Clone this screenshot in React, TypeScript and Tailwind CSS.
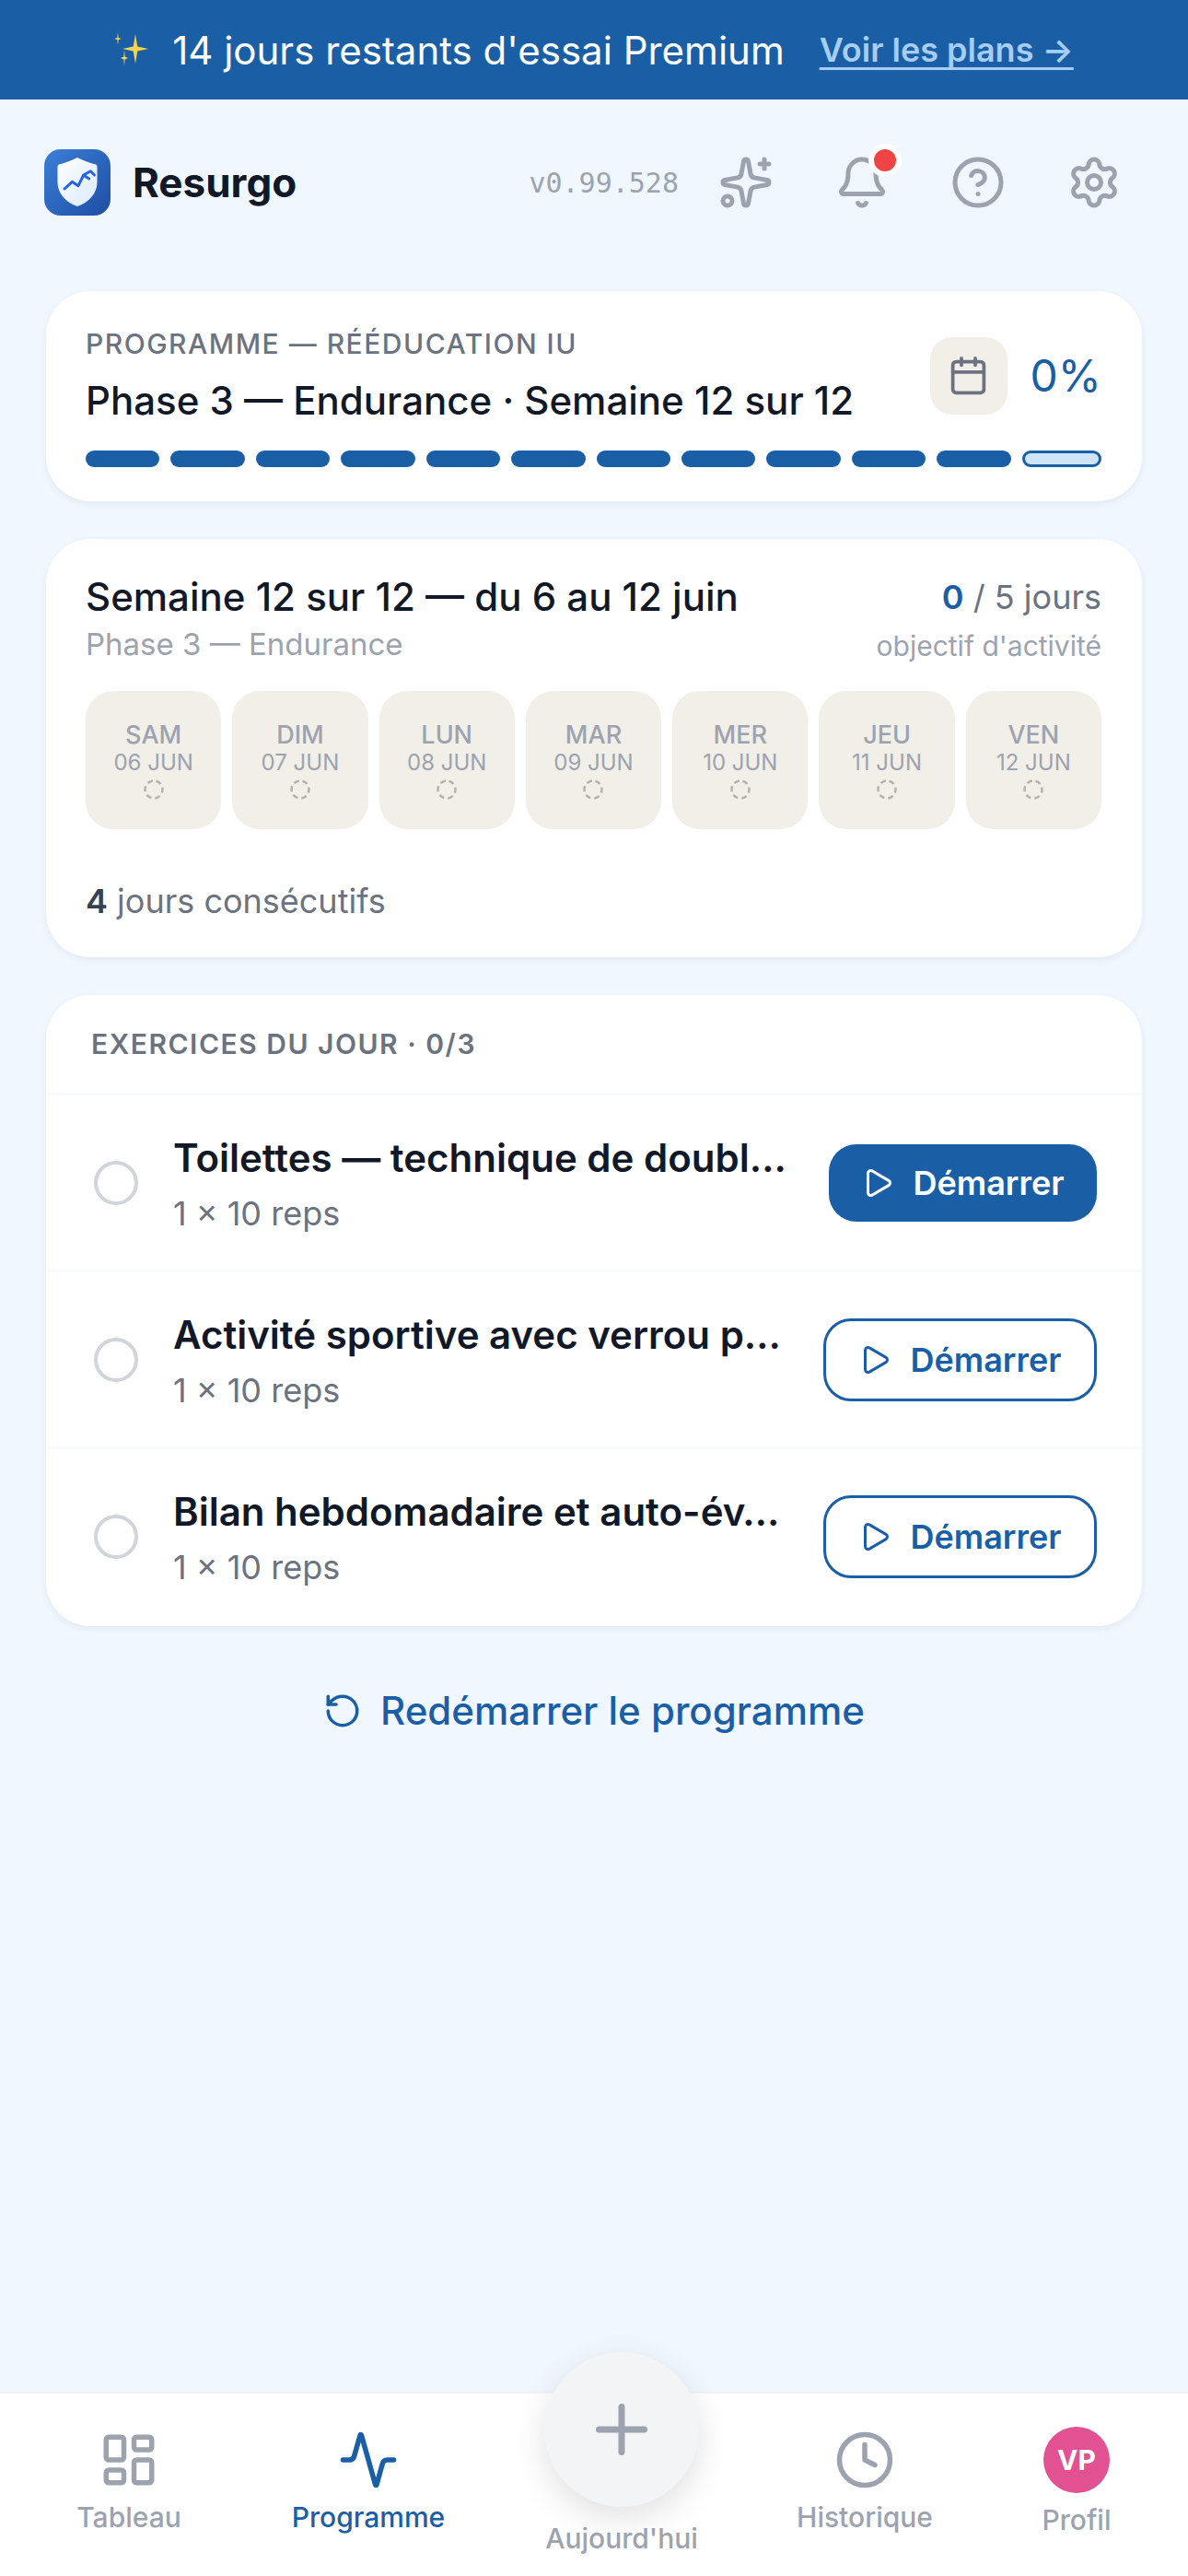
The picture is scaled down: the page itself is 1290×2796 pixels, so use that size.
import { Activity, Bell, Calendar, CircleHelp, Clock, LayoutDashboard, Play, Plus, RotateCcw, Settings, Sparkles } from 'lucide-react';

const DAYS = [
  { day: 'SAM', date: '06 JUN' },
  { day: 'DIM', date: '07 JUN' },
  { day: 'LUN', date: '08 JUN' },
  { day: 'MAR', date: '09 JUN' },
  { day: 'MER', date: '10 JUN' },
  { day: 'JEU', date: '11 JUN' },
  { day: 'VEN', date: '12 JUN' },
];

const EXERCISES = [
  { title: 'Toilettes — technique de doubl…', primary: true },
  { title: 'Activité sportive avec verrou p…', primary: false },
  { title: 'Bilan hebdomadaire et auto-év…', primary: false },
];

function Star({ cx, cy, rx, ry }: { cx: number; cy: number; rx: number; ry: number }) {
  const kx = rx * 0.16;
  const ky = ry * 0.16;
  return (
    <path
      d={`M${cx} ${cy - ry}L${cx + kx} ${cy - ky}L${cx + rx} ${cy}L${cx + kx} ${cy + ky}L${cx} ${cy + ry}L${cx - kx} ${cy + ky}L${cx - rx} ${cy}L${cx - kx} ${cy - ky}Z`}
      fill="#fcd34d"
    />
  );
}

function SparklesEmoji() {
  return (
    <svg width="38" height="38" viewBox="0 0 38 38" className="shrink-0">
      <Star cx={23} cy={18} rx={14} ry={16} />
      <Star cx={4} cy={7} rx={4} ry={7} />
      <Star cx={11} cy={28} rx={4} ry={9} />
    </svg>
  );
}

function Logo() {
  return (
    <svg width="72" height="72" viewBox="0 0 72 72" className="shrink-0">
      <defs>
        <linearGradient id="logoBg" x1="0" y1="0" x2="1" y2="1">
          <stop offset="0" stopColor="#3b7fd9" />
          <stop offset="1" stopColor="#1e4ea3" />
        </linearGradient>
        <linearGradient id="logoShield" x1="0" y1="0" x2="1" y2="1">
          <stop offset="0" stopColor="#ffffff" />
          <stop offset="1" stopColor="#dbeafe" />
        </linearGradient>
      </defs>
      <rect width="72" height="72" rx="18" fill="url(#logoBg)" />
      <path
        d="M36 9C43 12.5 50 15 56 16.5C57 17 57.5 18 57.5 19V36C57.5 48 48 58 36 62C24 58 14.5 48 14.5 36V19C14.5 18 15 17 16 16.5C22 15 29 12.5 36 9Z"
        fill="url(#logoShield)"
      />
      <path
        d="M22 43L30.3 35.3L37 39.7L42.7 28L48.7 32M42.7 28L50.3 23.7L54.5 28"
        fill="none"
        stroke="#2563eb"
        strokeWidth="3"
        strokeLinecap="round"
        strokeLinejoin="round"
      />
    </svg>
  );
}

function DashedRing() {
  return (
    <svg width="24" height="24" viewBox="0 0 24 24" className="mt-[2px]">
      <circle cx="12" cy="12" r="9.5" fill="none" stroke="#b5b2aa" strokeWidth="2.5" strokeDasharray="6 3.95" transform="rotate(-75 12 12)" />
    </svg>
  );
}

function DayCell({ day, date }: { day: string; date: string }) {
  return (
    <div className="flex h-[150px] flex-col items-center rounded-[30px] bg-[#f1efe8] pt-[32px]">
      <span className="text-[27px] leading-[31px] font-medium text-[#9ca3af]">{day}</span>
      <span className="text-[24px] leading-[30px] text-[#9ca3af]">{date}</span>
      <DashedRing />
    </div>
  );
}

function ExerciseRow({ title, primary }: { title: string; primary: boolean }) {
  return (
    <div className="flex h-[192px] items-center border-t-[3px] border-[#f9fafb] pr-[49px] pl-[52px]">
      <div className="h-[48px] w-[48px] shrink-0 rounded-full border-[4.5px] border-[#d1d5db]" />
      <div className="ml-[38px] min-w-0 flex-1 pt-[4px]">
        <div className="truncate text-[42px] leading-[54px] font-semibold text-[#111827]">{title}</div>
        <div className="mt-[9px] text-[36px] leading-[48px] text-[#6b7280]">1 × 10 reps</div>
      </div>
      {primary ? (
        <button className="ml-[30px] flex h-[84px] w-[291px] shrink-0 items-center justify-center gap-[20px] rounded-[30px] bg-[#1a5fa5] text-[36px] font-semibold text-white">
          <Play size={36} />
          Démarrer
        </button>
      ) : (
        <button className="ml-[30px] flex h-[90px] w-[297px] shrink-0 items-center justify-center gap-[20px] rounded-[30px] border-[3px] border-[#1a5fa5] bg-white text-[36px] font-semibold text-[#1a5fa5]">
          <Play size={36} />
          Démarrer
        </button>
      )}
    </div>
  );
}

function NavItem({ label, active, children }: { label: string; active?: boolean; children: React.ReactNode }) {
  return (
    <div className="flex flex-col items-center pt-[39px]">
      <div className={active ? 'text-[#1a5fa5]' : 'text-[#9ca3af]'}>{children}</div>
      <span className={`mt-[8px] text-[30px] leading-[42px] font-medium ${active ? 'text-[#1a5fa5]' : 'text-[#9ca3af]'}`}>
        {label}
      </span>
    </div>
  );
}

export default function App() {
  return (
    <div className="flex min-h-[2796px] flex-col bg-[#f0f7ff] font-['Inter',sans-serif]">
      <div className="flex h-[108px] items-center justify-center bg-[#1a5fa5]">
        <SparklesEmoji />
        <span className="ml-[25px] text-[42px] text-white">14 jours restants d'essai Premium</span>
        <a className="ml-[38px] text-[36px] font-semibold text-[#a5cdf5] underline decoration-[3px] underline-offset-[6px] [text-decoration-skip-ink:none]">Voir les plans →</a>
      </div>

      <header className="flex h-[180px] items-center pr-[72px] pl-[48px]">
        <Logo />
        <span className="ml-[24px] text-[44px] font-bold text-[#111827]">Resurgo</span>
        <span className="ml-auto font-['DejaVu_Sans_Mono',monospace] text-[30px] text-[#9ca3af]">v0.99.528</span>
        <div className="ml-[43px] flex items-center gap-[66px] text-[#9ca3af]">
          <Sparkles size={60} />
          <div className="relative h-[60px] w-[60px]">
            <Bell size={60} />
            <span className="absolute top-[-12px] left-[37px] h-[36px] w-[36px] rounded-full border-[6px] border-white bg-[#ef4444]" />
          </div>
          <CircleHelp size={60} />
          <Settings size={60} />
        </div>
      </header>

      <main className="flex-1 px-[50px] pt-[28px]">
        <section className="rounded-[48px] bg-white py-[37px] pr-[44px] pl-[43px] shadow-[0_3px_9px_rgba(0,0,0,0.06)]">
          <div className="flex items-center justify-between">
            <div>
              <div className="text-[30px] leading-[40px] font-medium tracking-[1.5px] text-[#6b7280]">PROGRAMME — RÉÉDUCATION IU</div>
              <div className="mt-[15px] text-[42px] leading-[54px] font-medium text-[#111827]">Phase 3 — Endurance · Semaine 12 sur 12</div>
            </div>
            <div className="flex items-center gap-[25px]">
              <div className="flex h-[84px] w-[84px] items-center justify-center rounded-[24px] bg-[#f1efe8] text-[#6b7280]">
                <Calendar size={45} />
              </div>
              <span className="text-[48px] text-[#1a5fa5]">0%</span>
            </div>
          </div>
          <div className="mt-[27px] flex gap-[12px]">
            {Array.from({ length: 11 }).map((_, i) => (
              <div key={i} className="h-[18px] flex-1 rounded-full bg-[#1a5fa5]" />
            ))}
            <div className="h-[18px] flex-1 rounded-full border-[3px] border-[#1a5fa5] bg-[#d0e4f9]" />
          </div>
        </section>

        <section className="mt-[41px] rounded-[48px] bg-white pt-[36px] pr-[44px] pb-[34px] pl-[43px] shadow-[0_3px_9px_rgba(0,0,0,0.06)]">
          <div className="flex justify-between">
            <div>
              <div className="text-[42px] leading-[54px] font-medium text-[#111827]">Semaine 12 sur 12 — du 6 au 12 juin</div>
              <div className="mt-[1px] text-[33px] leading-[46px] text-[#9ca3af]">Phase 3 — Endurance</div>
            </div>
            <div className="text-right">
              <div className="text-[36px] leading-[54px] text-[#6b7280]">
                <span className="font-semibold text-[#1a5fa5]">0</span> / 5 jours
              </div>
              <div className="mt-[6px] text-[30px] leading-[40px] text-[#9ca3af]">objectif d'activité</div>
            </div>
          </div>
          <div className="mt-[28px] grid grid-cols-7 gap-[12px]">
            {DAYS.map((d) => (
              <DayCell key={d.day} day={d.day} date={d.date} />
            ))}
          </div>
          <div className="mt-[51px] text-[36px] leading-[54px] text-[#6b7280]">
            <span className="font-semibold text-[#374151]">4</span> jours consécutifs
          </div>
        </section>

        <section className="mt-[41px] rounded-[48px] bg-white pb-[3px] shadow-[0_3px_9px_rgba(0,0,0,0.06)]">
          <div className="flex h-[106px] items-center pl-[49px] text-[30px] font-semibold tracking-[1.5px] text-[#6b7280]">EXERCICES DU JOUR · 0/3</div>
          {EXERCISES.map((ex) => (
            <ExerciseRow key={ex.title} title={ex.title} primary={ex.primary} />
          ))}
        </section>

        <div className="mt-[65px] flex items-center justify-center gap-[20px] text-[42px] leading-[54px] font-medium text-[#1a5fa5]">
          <RotateCcw size={42} />
          Redémarrer le programme
        </div>
      </main>

      <nav className="relative grid h-[201px] grid-cols-[280px_240px_310px_218px_242px] border-t-[3px] border-[#f3f4f6] bg-white">
        <NavItem label="Tableau">
          <LayoutDashboard size={66} />
        </NavItem>
        <NavItem label="Programme" active>
          <Activity size={66} />
        </NavItem>
        <div className="flex flex-col items-center">
          <div className="mt-[-45px] flex h-[168px] w-[168px] items-center justify-center rounded-full bg-[#f3f4f6] text-[#9ca3af] shadow-[0_12px_36px_rgba(0,0,0,0.12)]">
            <Plus size={84} />
          </div>
          <span className="mt-[13px] text-[30px] leading-[42px] font-medium text-[#9ca3af]">Aujourd'hui</span>
        </div>
        <NavItem label="Historique">
          <Clock size={66} />
        </NavItem>
        <div className="flex flex-col items-center pt-[36px]">
          <div className="flex h-[72px] w-[72px] items-center justify-center rounded-full bg-[#e25192] text-[30px] font-bold text-white">VP</div>
          <span className="mt-[8px] text-[30px] leading-[42px] font-medium text-[#9ca3af]">Profil</span>
        </div>
      </nav>
    </div>
  );
}
